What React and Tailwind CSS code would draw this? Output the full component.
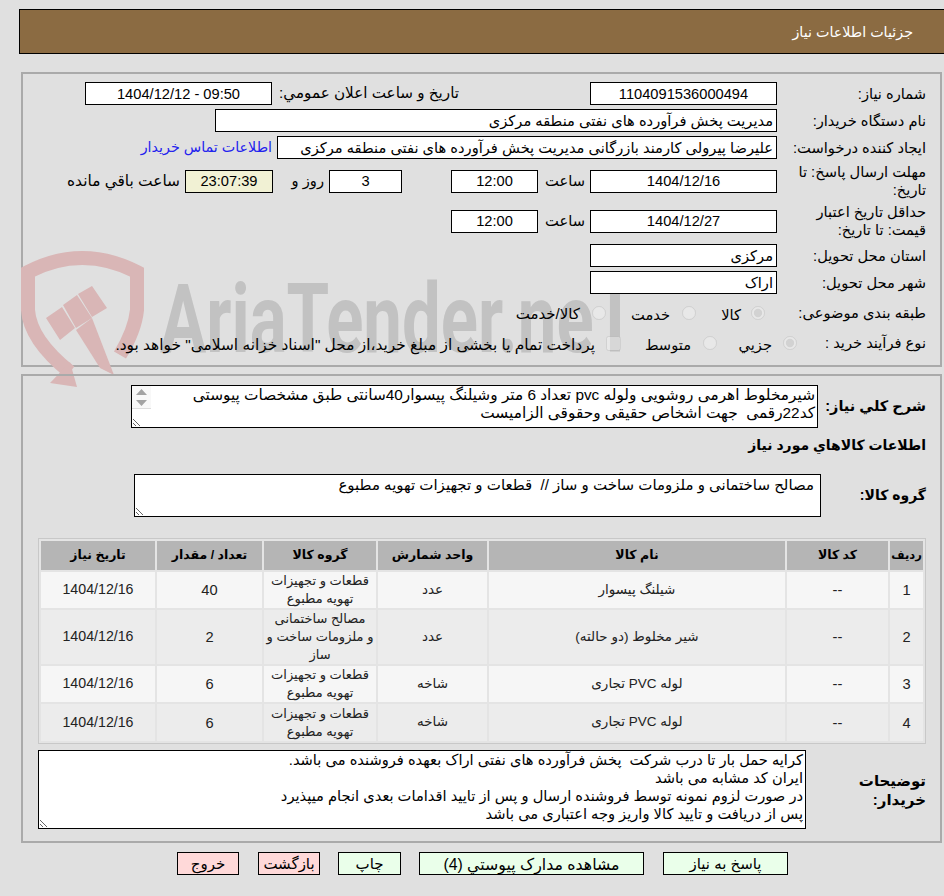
import React from 'react'

const FONT = "font-['Liberation_Sans','DejaVu_Sans',sans-serif]"

const rows = [
    { id: 1, code: '--', name: 'شیلنگ پیسوار', unit: 'عدد', group: ['قطعات و تجهیزات', 'تهویه مطبوع'], qty: 40, date: '1404/12/16', h: 'h-[36px]', bg: 'bg-[#f6f6f6]' },
    { id: 2, code: '--', name: 'شیر مخلوط (دو حالته)', unit: 'عدد', group: ['مصالح ساختمانی', 'و ملزومات ساخت و', 'ساز'], qty: 2, date: '1404/12/16', h: 'h-[54px]', bg: 'bg-[#ececec]' },
    { id: 3, code: '--', name: 'لوله PVC تجاری', unit: 'شاخه', group: ['قطعات و تجهیزات', 'تهویه مطبوع'], qty: 6, date: '1404/12/16', h: 'h-[36px]', bg: 'bg-[#f6f6f6]' },
    { id: 4, code: '--', name: 'لوله PVC تجاری', unit: 'شاخه', group: ['قطعات و تجهیزات', 'تهویه مطبوع'], qty: 6, date: '1404/12/16', h: 'h-[37px]', bg: 'bg-[#ececec]' }
]

const headers = [
    ['ردیف', 'w-[33px] text-[11.5px]'],
    ['کد کالا', 'w-[101px] text-[12.5px]'],
    ['نام کالا', 'w-[296px] text-[12.5px]'],
    ['واحد شمارش', 'w-[109px] text-[12.5px]'],
    ['گروه کالا', 'w-[112px] text-[12.5px]'],
    ['تعداد / مقدار', 'w-[105px] text-[12.5px]'],
    ['تاریخ نیاز', 'w-[114px] text-[12.5px]']
]

function Box({ className = '', center, bg = 'bg-white', children }) {
    return (
        <div className={`flex h-[23px] shrink-0 items-center border border-black ${bg} px-[3px] text-[14.67px] whitespace-nowrap overflow-hidden ${center ? 'justify-center' : ''} ${className}`}>
            {children}
        </div>
    )
}

function Label({ children, className = 'w-[149px]' }) {
    return <div className={`shrink-0 pl-[9px] text-[14.67px] leading-[18px] ${className}`}>{children}</div>
}

function Radio({ checked }) {
    return <input type="radio" disabled checked={!!checked} readOnly className="m-0 h-[14px] w-[14px] shrink-0 opacity-60" />
}

function Watermark() {
    return (
        <div className="pointer-events-none absolute top-[176px] left-[-3px] h-[140px] w-[620px]">
            <svg width="130" height="140" viewBox="0 0 130 140" className="absolute top-0 left-0">
                <path d="M50 122 Q10 90 8 60 V22 Q62 -6 117 22 V60 Q115 80 100 105" fill="none" stroke="#d9b6b6" strokeWidth="14" />
                <path d="M30 133 L57 137 L50 112 Z" fill="#d9b6b6" />
                <path d="M56 80 L72 68 L94 125 L80 118 Z" fill="#d9b6b6" />
                <path d="M26 68 L42 57 L55 78 L40 90 Z M43 55 L57 45 L72 68 L56 78 Z M58 44 L72 36 L87 58 L72 67 Z" fill="#d9b6b6" />
            </svg>
            <div dir="ltr" className="absolute top-[19px] left-[140px] origin-left scale-x-[0.71] font-['Roboto',sans-serif] text-[97px] leading-[100px] font-bold whitespace-nowrap text-[#c2c2c2]">
                AriaTender.neT
            </div>
        </div>
    )
}

export default function App() {
    return (
        <div dir="rtl" className={`relative h-[896px] w-[944px] overflow-hidden bg-[#e0e0e0] text-black ${FONT}`}>
            <div className="h-[9px]" />
            {/* Header */}
            <div className="mr-0 ml-[19px] h-[45px] border-y border-l border-black bg-[#8b6b42] pt-[12px] pr-[31px] text-[14.3px] text-white">
                جزئیات اطلاعات نیاز
            </div>

            {/* Need info */}
            <div className="relative mt-[18px] mr-[2px] ml-[21px] h-[295px] border-2 border-[#aaa] pr-[14px]">
                <Watermark />
                <div className="relative flex flex-col">
                    <div className="mt-[8px] flex items-center">
                        <Label>شماره نیاز:</Label>
                        <Box center className="w-[187px]">1104091536000494</Box>
                        <div className="mr-[131px] w-[181px] text-[15.2px] whitespace-nowrap">تاریخ و ساعت اعلان عمومي:</div>
                        <Box center className="mr-[6px] w-[187px]"><span dir="ltr">1404/12/12 - 09:50</span></Box>
                    </div>
                    <div className="mt-[4px] flex items-center">
                        <Label>نام دستگاه خریدار:</Label>
                        <Box className="w-[562px]">مدیریت پخش فرآورده های نفتی منطقه مرکزی</Box>
                    </div>
                    <div className="mt-[4px] flex items-center">
                        <Label className="w-[149px] whitespace-nowrap">ایجاد کننده درخواست:</Label>
                        <Box className="w-[500px]">علیرضا پیرولی کارمند بازرگانی مدیریت پخش فرآورده های نفتی منطقه مرکزی</Box>
                        <span className="mr-[5px] text-[14.3px] whitespace-nowrap text-[#2222ee]">اطلاعات تماس خریدار</span>
                    </div>
                    <div className="mt-[4px] flex items-center">
                        <Label>مهلت ارسال پاسخ: تا تاریخ:</Label>
                        <Box center className="h-[22px] w-[187px]">1404/12/16</Box>
                        <span className="mr-[5px] w-[47px] text-[14.67px]">ساعت</span>
                        <Box center className="h-[22px] w-[87px]">12:00</Box>
                        <div className="mr-[49px]" />
                        <Box center className="h-[22px] w-[73px]">3</Box>
                        <span className="mr-[5px] w-[51px] text-[14.67px]">روز و</span>
                        <Box center bg="bg-[#f1f1d4]" className="h-[22px] w-[88px]">23:07:39</Box>
                        <span className="mr-[5px] text-[15.4px] whitespace-nowrap">ساعت باقي مانده</span>
                    </div>
                    <div className="mt-[4px] flex items-center">
                        <Label>حداقل تاریخ اعتبار قیمت: تا تاریخ:</Label>
                        <Box center className="w-[187px]">1404/12/27</Box>
                        <span className="mr-[5px] w-[47px] text-[14.67px]">ساعت</span>
                        <Box center className="w-[87px]">12:00</Box>
                    </div>
                    <div className="mt-[5px] flex items-center">
                        <Label>استان محل تحویل:</Label>
                        <Box className="w-[187px]">مرکزی</Box>
                    </div>
                    <div className="mt-[4px] flex items-center">
                        <Label>شهر محل تحویل:</Label>
                        <Box className="w-[187px]">اراک</Box>
                    </div>
                    <div className="mt-[8px] flex h-[22px] items-center text-[14.67px]">
                        <Label className="w-[149px] whitespace-nowrap">طبقه بندی موضوعی:</Label>
                        <div className="mr-[12px] flex items-center gap-[10px]"><Radio checked /><span className="w-[45px] pt-[3px]">کالا</span></div>
                        <div className="flex items-center gap-[12px]"><Radio /><span className="w-[64px] pt-[3px]">خدمت</span></div>
                        <div className="flex items-center gap-[12px]"><Radio /><span className="pt-[3px] text-[15px]">کالا/خدمت</span></div>
                    </div>
                    <div className="mt-[8px] flex h-[22px] items-center text-[14.67px]">
                        <Label className="w-[129px] whitespace-nowrap">نوع فرآیند خرید :</Label>
                        <div className="flex items-center gap-[11px]"><Radio checked /><span className="w-[55px] pt-[3px]">جزيي</span></div>
                        <div className="flex items-center gap-[12px]"><Radio /><span className="w-[70px] pt-[3px]">متوسط</span></div>
                        <div className="flex items-center gap-[11px]">
                            <input type="checkbox" disabled className="m-0 h-[15px] w-[15px] opacity-60" />
                            <span className="pt-[3px] text-[15.4px] whitespace-nowrap">پرداخت تمام یا بخشی از مبلغ خرید،از محل "اسناد خزانه اسلامی" خواهد بود.</span>
                        </div>
                    </div>
                </div>
            </div>

            {/* Description and items */}
            <div className="relative mt-[7px] mr-[2px] ml-[21px] h-[469px] border-2 border-[#aaa] pr-[14px] pl-[15px]">
                <div className="mt-[9px] flex items-center">
                    <div className="w-[108px] shrink-0 text-[14.5px] font-bold whitespace-nowrap">شرح کلي نياز:</div>
                    <div className="relative flex">
                        <textarea
                            readOnly
                            className="h-[43px] w-[687px] border border-black bg-white pt-0 pr-[2px] pb-0 pl-[24px] text-[15.35px] leading-[18px] outline-none"
                            defaultValue={'شیرمخلوط اهرمی روشویی ولوله pvc تعداد 6 متر وشیلنگ پیسوار40سانتی طبق مشخصات پیوستی کد22رقمی  جهت اشخاص حقیقی وحقوقی الزامیست'}
                        />
                        {/* scrollbar arrows */}
                        <div className="pointer-events-none absolute top-[1px] left-[1px] h-[23px] w-[19px] border-b border-[#ddd] bg-[#f8f8f8]">
                            <svg width="19" height="22" viewBox="0 0 19 22">
                                <path d="M4 9 L9.5 3 L15 9 Z M4 14 L15 14 L9.5 20 Z" fill="#a3a3a3" />
                            </svg>
                        </div>
                    </div>
                </div>
                <div className="mt-[7px] text-[14px] leading-[20px] font-bold">اطلاعات کالاهاي مورد نياز</div>
                <div className="mt-[19px] flex items-center">
                    <div className="w-[105px] shrink-0 text-[14px] font-bold">گروه کالا:</div>
                    <textarea
                        readOnly
                        className="h-[43px] w-[687px] border border-black bg-white px-[6px] py-[1px] text-[15px] leading-[18px] outline-none"
                        defaultValue={'مصالح ساختمانی و ملزومات ساخت و ساز //  قطعات و تجهیزات تهویه مطبوع'}
                    />
                </div>
                <div className="mt-[21px] w-[888px] border border-[#c8c8c8] bg-[#e4e4e4]">
                    <table className="w-full table-fixed border-separate border-spacing-[2px] text-center text-[13.5px]">
                        <thead>
                            <tr className="h-[29px] bg-[#b5b5b5] font-bold">
                                {headers.map(([title, width]) => (
                                    <th key={title} className={`${width} p-0 whitespace-nowrap`}>{title}</th>
                                ))}
                            </tr>
                        </thead>
                        <tbody>
                            {rows.map((row) => (
                                <tr key={row.id} className={`${row.h} ${row.bg} text-[#222]`}>
                                    <td className="p-0 text-[14.67px]">{row.id}</td>
                                    <td className="p-0 text-[14.67px]">{row.code}</td>
                                    <td className="p-0">{row.name}</td>
                                    <td className="p-0">{row.unit}</td>
                                    <td className="p-0 text-[13px] leading-[18px]">
                                        {row.group.map((line) => <div key={line} className="whitespace-nowrap">{line}</div>)}
                                    </td>
                                    <td className="p-0 text-[14.67px]">{row.qty}</td>
                                    <td className="p-0 text-[14.2px]">{row.date}</td>
                                </tr>
                            ))}
                        </tbody>
                    </table>
                </div>
                <div className="mt-[6px] flex items-center">
                    <div className="w-[120px] shrink-0 text-[15px] leading-[19px] font-bold">
                        <div>توضیحات</div>
                        <div>خریدار:</div>
                    </div>
                    <textarea
                        readOnly
                        className="h-[79px] w-[768px] border border-black bg-white px-[2px] text-[14.67px] leading-[18px] outline-none"
                        defaultValue={'کرایه حمل بار تا درب شرکت  پخش فرآورده های نفتی اراک بعهده فروشنده می باشد.\nایران کد مشابه می باشد\nدر صورت لزوم نمونه توسط فروشنده ارسال و پس از تایید اقدامات بعدی انجام میپذیرد\nپس از دریافت و تایید کالا واریز وجه اعتباری می باشد'}
                    />
                </div>
            </div>

            {/* Actions */}
            <div className="mt-[9px] flex h-[23px] justify-start pr-[156px] text-[15px]">
                <button className="w-[125px] border border-black bg-[#eaffea]">پاسخ به نياز</button>
                <button className="mr-[19px] w-[225px] border border-black bg-[#eaffea] text-[15.8px]">مشاهده مدارک پیوستي (4)</button>
                <button className="mr-[18px] w-[63px] border border-black bg-[#eaffea]">چاپ</button>
                <button className="mr-[18px] w-[62px] border border-black bg-[#ffd9d9] whitespace-nowrap">بازگشت</button>
                <button className="mr-[19px] w-[62px] border border-black bg-[#ffd9d9]">خروج</button>
            </div>
        </div>
    )
}
